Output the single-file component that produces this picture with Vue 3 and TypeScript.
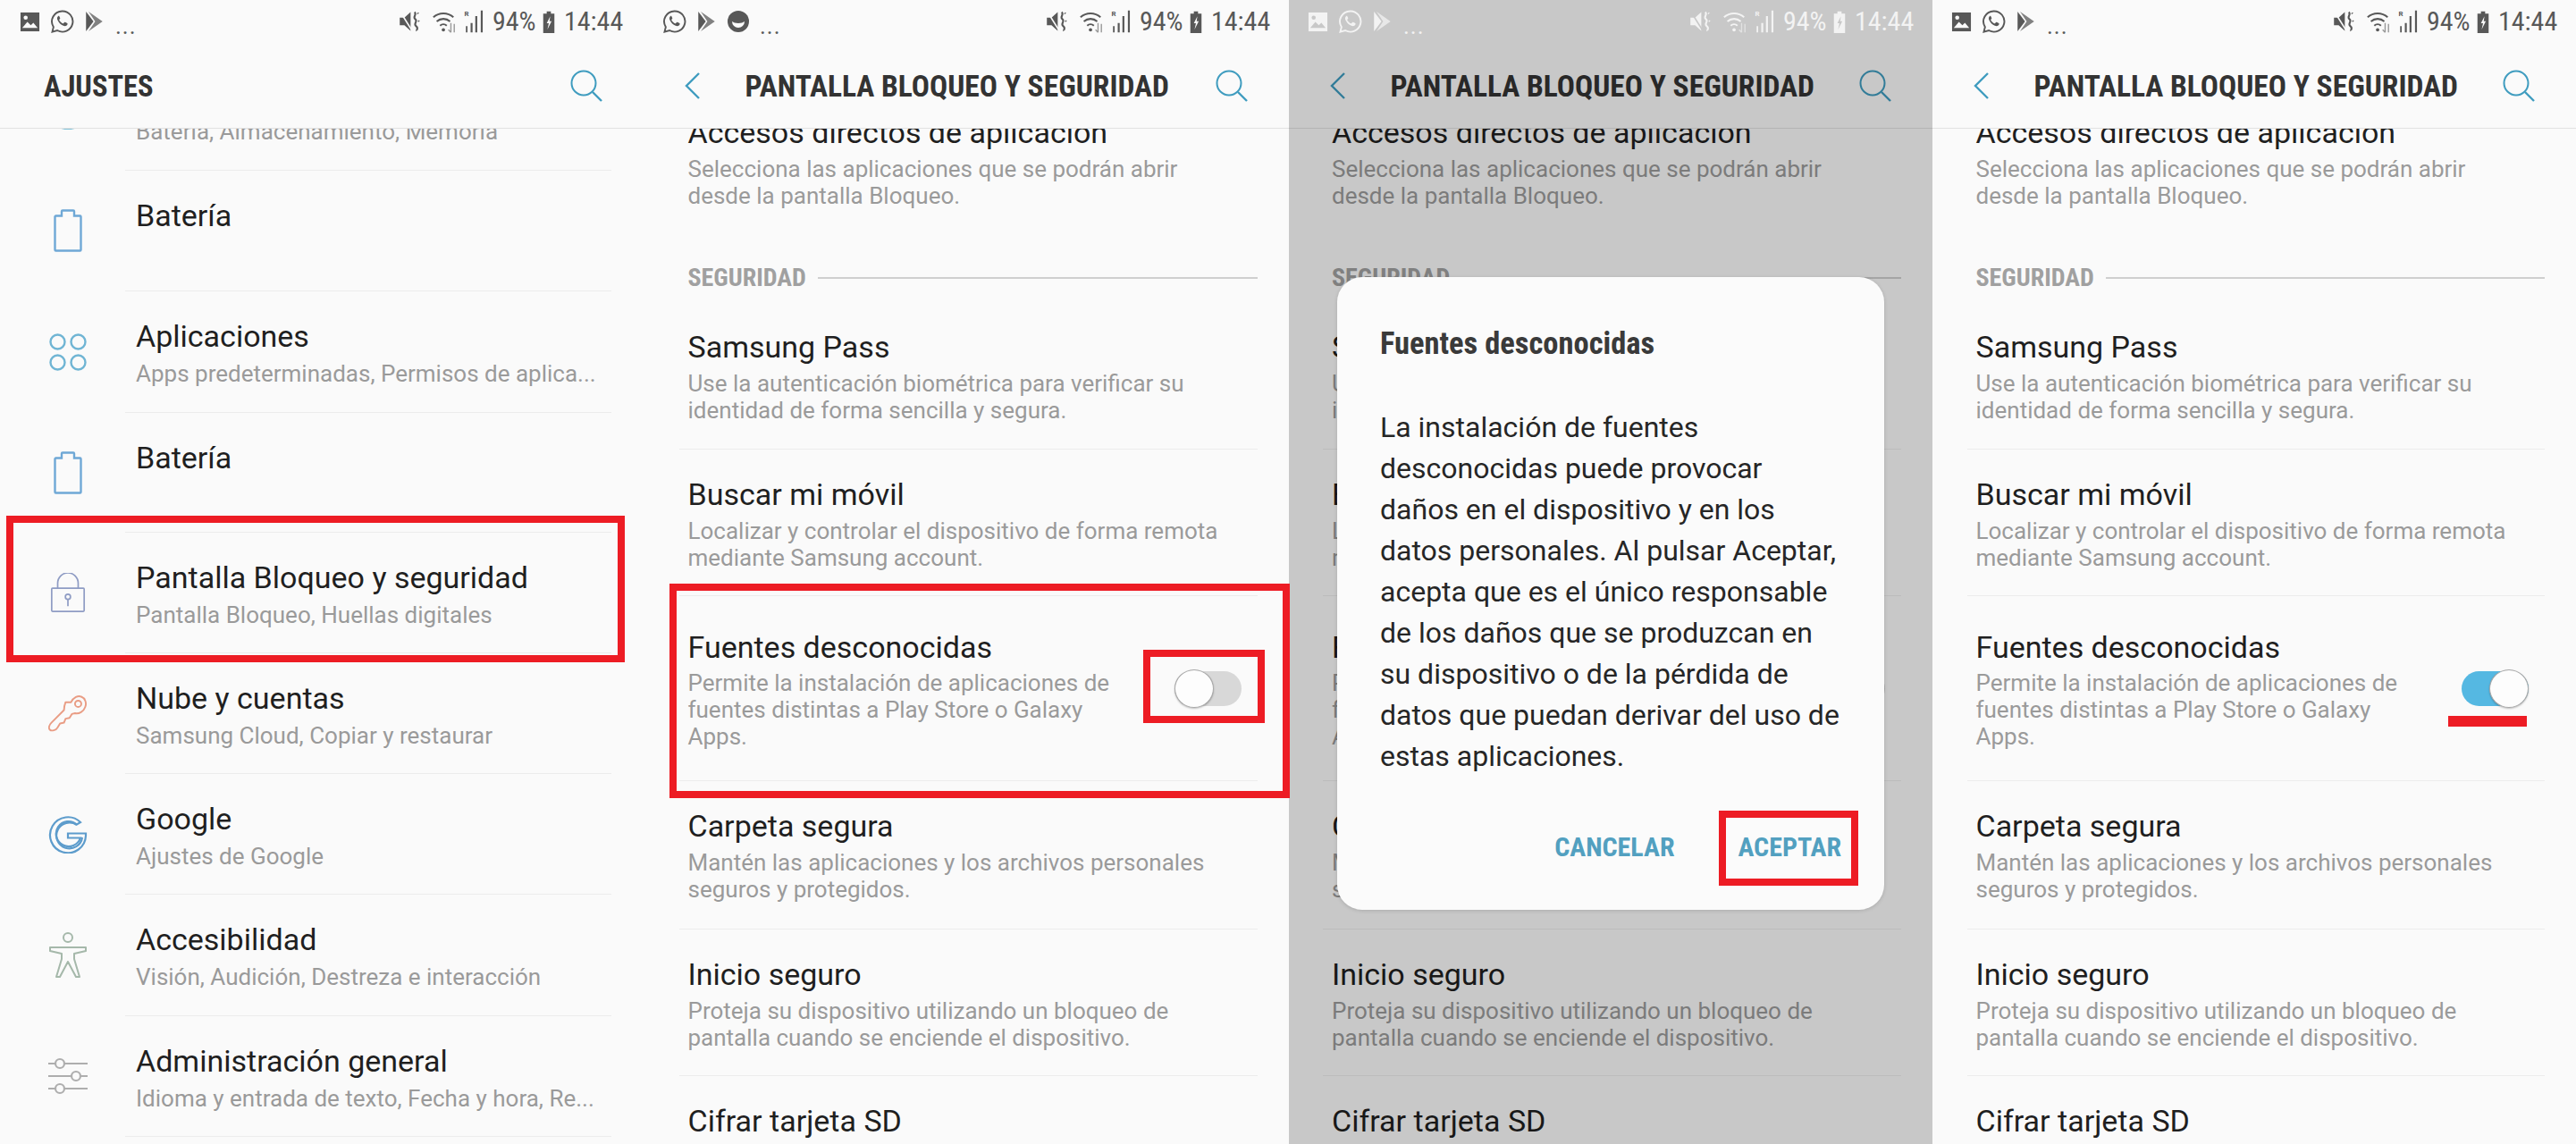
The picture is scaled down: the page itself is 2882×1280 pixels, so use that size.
<script setup lang="ts">
type Row = { t: string; s: string; icon: string; h: number };
const rows: Row[] = [
  { t: '', s: 'Batería, Almacenamiento, Memoria', icon: 'gear', h: 135 },
  { t: 'Batería', s: '', icon: 'battery', h: 134 },
  { t: 'Aplicaciones', s: 'Apps predeterminadas, Permisos de aplica...', icon: 'apps', h: 135 },
  { t: 'Batería', s: '', icon: 'battery', h: 133 },
  { t: 'Pantalla Bloqueo y seguridad', s: 'Pantalla Bloqueo, Huellas digitales', icon: 'lock', h: 134 },
  { t: 'Nube y cuentas', s: 'Samsung Cloud, Copiar y restaurar', icon: 'key', h: 134 },
  { t: 'Google', s: 'Ajustes de Google', icon: 'google', h: 134 },
  { t: 'Accesibilidad', s: 'Visión, Audición, Destreza e interacción', icon: 'body', h: 135 },
  { t: 'Administración general', s: 'Idioma y entrada de texto, Fecha y hora, Re...', icon: 'sliders', h: 134 }
];
type SRow = { t: string; lines: string[]; h: number; toggle?: boolean };
const secRows: SRow[] = [
  { t: 'Samsung Pass', lines: ['Use la autenticación biométrica para verificar su', 'identidad de forma sencilla y segura.'], h: 164 },
  { t: 'Buscar mi móvil', lines: ['Localizar y controlar el dispositivo de forma remota', 'mediante Samsung account.'], h: 163 },
  { t: 'Fuentes desconocidas', lines: ['Permite la instalación de aplicaciones de', 'fuentes distintas a Play Store o Galaxy', 'Apps.'], h: 206, toggle: true },
  { t: 'Carpeta segura', lines: ['Mantén las aplicaciones y los archivos personales', 'seguros y protegidos.'], h: 165 },
  { t: 'Inicio seguro', lines: ['Proteja su dispositivo utilizando un bloqueo de', 'pantalla cuando se enciende el dispositivo.'], h: 163 },
  { t: 'Cifrar tarjeta SD', lines: [], h: 76 }
];
const bodyLines = [
  'La instalación de fuentes',
  'desconocidas puede provocar',
  'daños en el dispositivo y en los',
  'datos personales. Al pulsar Aceptar,',
  'acepta que es el único responsable',
  'de los daños que se produzcan en',
  'su dispositivo o de la pérdida de',
  'datos que puedan derivar del uso de',
  'estas aplicaciones.'
];
const panels = [
  { key: 'p1', left: ['image', 'whatsapp', 'play'], on: false, dim: false, main: false },
  { key: 'p2', left: ['whatsapp', 'play', 'face'], on: false, dim: false, main: true },
  { key: 'p3', left: ['image', 'whatsapp', 'play'], on: false, dim: true, main: true },
  { key: 'p4', left: ['image', 'whatsapp', 'play'], on: true, dim: false, main: true }
];
</script>

<template>
  <div class="shot">
    <section v-for="p in panels" :key="p.key" class="panel" :class="[p.key, { dimmed: p.dim }]">
      <div class="status">
        <div class="st-left">
          <template v-for="ic in p.left" :key="ic">
            <svg v-if="ic === 'image'" class="si si-image" viewBox="0 0 24 24"><path d="M1 1h22v22H1z" fill="currentColor"/><circle cx="7" cy="7" r="2.4" class="cut"/><path d="M3 19l6-7 4 4 3-3 5 6z" class="cut"/></svg>
            <svg v-else-if="ic === 'whatsapp'" class="si si-wa" viewBox="0 0 28 28"><path d="M14 2a12 12 0 0 0-10 18.4L2.6 26l5.8-1.6A12 12 0 1 0 14 2z" fill="none" stroke="currentColor" stroke-width="2"/><path d="M9.5 7.800c-1.500 1-1.600 3-.6 5 1.500 3 3.500 5 6.500 6.200 2 .8 3.800.4 4.600-1 .4-.8.4-1.500 0-1.800l-2.500-1.300c-.6-.2-.9 0-1.200.5l-.7.9c-.3.2-.6.2-1 0-1.800-.9-3-2.100-3.900-3.800-.2-.4-.1-.7.1-.9l.7-.8c.2-.3.3-.6.1-1L10.700 8c-.3-.5-.7-.5-1.200-.2z" fill="currentColor"/></svg>
            <svg v-else-if="ic === 'play'" class="si si-play" viewBox="0 0 22 26"><path d="M1 1v24l9-12z" fill="currentColor"/><path d="M4 1l17 12L4 25l8-12z" fill="currentColor" opacity=".75"/></svg>
            <svg v-else class="si si-face" viewBox="0 0 24 24"><circle cx="12" cy="12" r="12" fill="currentColor"/><path d="M5 12a7 7 0 0 0 14 0 8 4 0 0 1-14 0z" class="cut"/></svg>
          </template>
          <span class="dots">...</span>
        </div>
        <div class="st-right">
          <svg class="si si-mute" viewBox="0 0 28 30"><path d="M1 10h6l8-7v24l-8-7H1z" fill="currentColor"/><path d="M2 3l15 24" class="slash" stroke-width="2"/><path d="M20 3c4 3-3 6 1 9s-3 6 1 9 0 5 1 6M24 4l1 1M25 14l1 1" stroke="currentColor" stroke-width="2.4" fill="none"/></svg>
          <svg class="si si-wifi" viewBox="0 0 30 30"><path d="M2 10a18 18 0 0 1 24 0M6 15a12 12 0 0 1 16 0M10 20a6 6 0 0 1 8 0" fill="none" stroke="currentColor" stroke-width="2.2"/><circle cx="14" cy="25" r="2" fill="currentColor"/><path d="M23 17v11M20 25l3 3M27 18v10" stroke="currentColor" stroke-width="1.5" fill="none" opacity=".6"/></svg>
          <svg class="si si-signal" viewBox="0 0 24 32"><path d="M2 22h2v8H2zM8 18h2.500v12H8zM14 9h2.500v21H14zM21 2h2.500v28H21z" fill="currentColor"/><text x="0" y="9" class="r">R</text></svg>
          <span class="pct">94%</span>
          <svg class="si si-batt" viewBox="0 0 16 32"><path d="M5 1h6v3h5v28H0V4h5z" fill="currentColor"/><path d="M10 8l-5 10h3l-2 9 6-12H9z" class="cut"/></svg>
          <span class="clock">14:44</span>
        </div>
      </div>

      <header v-if="!p.main" class="head">
        <h1 class="ajustes">AJUSTES</h1>
        <svg class="search" viewBox="0 0 36 36"><circle cx="15" cy="15" r="13.5" fill="none" stroke="currentColor" stroke-width="2"/><path d="M25 25l10 10" stroke="currentColor" stroke-width="2.4"/></svg>
      </header>
      <header v-else class="head head2">
        <svg class="back" viewBox="0 0 18 30"><path d="M16 1L2 15l14 14" fill="none" stroke="currentColor" stroke-width="2.4"/></svg>
        <h1 class="ptitle">PANTALLA BLOQUEO Y SEGURIDAD</h1>
        <svg class="search" viewBox="0 0 36 36"><circle cx="15" cy="15" r="13.5" fill="none" stroke="currentColor" stroke-width="2"/><path d="M25 25l10 10" stroke="currentColor" stroke-width="2.4"/></svg>
      </header>

      <div v-if="!p.main" class="list">
        <div class="li1">
          <template v-for="(r, i) in rows" :key="i">
            <div class="row1" :style="{ height: r.h + 'px' }">
              <div class="icon-cell">
                <svg v-if="r.icon === 'gear'" class="ic" viewBox="0 0 44 44"><circle cx="22" cy="22" r="21" fill="none" stroke="#7fc1d8" stroke-width="2.5"/></svg>
                <svg v-else-if="r.icon === 'battery'" class="ic-batt" viewBox="0 0 32 48"><path d="M1.500 8.500a1 1 0 0 1 1-1h6.500V2.500a1 1 0 0 1 1-1h12a1 1 0 0 1 1 1v5h6.500a1 1 0 0 1 1 1v37a1 1 0 0 1-1 1h-27a1 1 0 0 1-1-1z" fill="none" stroke="#6fa8d6" stroke-width="2.4"/></svg>
                <svg v-else-if="r.icon === 'apps'" class="ic" viewBox="-1 -1 44 44"><g fill="none" stroke="#70b5d4" stroke-width="2.4"><circle cx="9.500" cy="9.500" r="8"/><circle cx="32.500" cy="9.500" r="8"/><circle cx="9.500" cy="32.500" r="8"/><circle cx="32.500" cy="32.500" r="8"/></g></svg>
                <svg v-else-if="r.icon === 'lock'" class="ic" viewBox="0 0 40 46"><g fill="none" stroke="#8f9cc4" stroke-width="1.800"><path d="M8 18v-6a12 12 0 0 1 24 0v6"/><rect x="1" y="18" width="38" height="27" rx="1"/><circle cx="20" cy="28" r="3"/><path d="M20 31v8"/></g></svg>
                <svg v-else-if="r.icon === 'key'" class="ic" viewBox="0 0 50 48"><g fill="none" stroke="#e99d85" stroke-width="2.2"><path d="M29 10c3-6 9-9 13-7 5 2 7 8 5 13-2 6-8 9-13 8l-4 1-3 5-5 1-2 5-5 1-3 5c-2 4-8 5-10 3-2-2-1-6 2-9l16-16c0-3 .5-6 2-10z" stroke-linejoin="round"/><circle cx="38" cy="12" r="4"/></g></svg>
                <svg v-else-if="r.icon === 'google'" class="ic" viewBox="0 0 44 44"><g fill="none" stroke="#5d9ccc" stroke-width="2.2"><path d="M36 9a20 20 0 1 0 6 15v-2.500H22v5h14a14 14 0 1 1-4-15z"/><path d="M32 12a14.500 14.500 0 1 0 6 14"/></g></svg>
                <svg v-else-if="r.icon === 'body'" class="ic-tall" viewBox="0 0 44 52"><g fill="none" stroke="#a5b8aa" stroke-width="2" stroke-linejoin="round"><circle cx="22" cy="6" r="5"/><path d="M2 17h40v4l-13 3 0 6 6 20h-4l-9-17-9 17h-4l6-20 0-6-13-3z"/></g></svg>
                <svg v-else class="ic" viewBox="0 0 44 42"><g fill="none" stroke="#aeaeae" stroke-width="2.2"><path d="M0 7h8M18 7h26M0 21h26M36 21h8M0 35h8M18 35h26"/><circle cx="13" cy="7" r="5"/><circle cx="31" cy="21" r="5"/><circle cx="13" cy="35" r="5"/></g></svg>
              </div>
              <div class="txt">
                <div class="title">{{ r.t }}</div>
                <div v-if="r.s" class="sub">{{ r.s }}</div>
              </div>
            </div>
            <div class="rule r1"></div>
          </template>
        </div>
      </div>

      <div v-else class="list">
        <div class="li2">
          <div class="title">Accesos directos de aplicación</div>
          <div class="sub lines">
            <span>Selecciona las aplicaciones que se podrán abrir</span>
            <span>desde la pantalla Bloqueo.</span>
          </div>
          <div class="sec"><span class="sec-t">SEGURIDAD</span><i class="sec-l"></i></div>
          <template v-for="(r, i) in secRows" :key="r.t">
            <div class="row2" :class="{ tall: r.toggle }" :style="{ height: r.h + 'px' }">
              <div class="txt">
                <div class="title">{{ r.t }}</div>
                <div v-if="r.lines.length" class="sub lines"><span v-for="l in r.lines" :key="l">{{ l }}</span></div>
              </div>
              <div v-if="r.toggle" class="toggle" :class="{ on: p.on }"><i class="knob"></i></div>
            </div>
            <div v-if="i < secRows.length - 1" class="rule r2"></div>
          </template>
        </div>
      </div>

      <div v-if="p.on" class="underline"></div>
      <div v-if="p.dim" class="scrim">
        <div class="dialog">
          <h2 class="d-title">Fuentes desconocidas</h2>
          <p class="d-body"><span v-for="l in bodyLines" :key="l">{{ l }}</span></p>
          <div class="d-btns">
            <span class="btn">CANCELAR</span>
            <span class="btn">ACEPTAR</span>
          </div>
        </div>
      </div>
    </section>

    <div class="mark m-a"></div>
    <div class="mark m-b"></div>
    <div class="mark m-c"></div>
    <div class="mark m-d"></div>
  </div>
</template>

<style>
html, body { margin: 0; background: #fafafa; }
</style>

<style scoped>
.shot {
  position: relative;
  display: grid;
  grid-template-columns: 720px 722px 720px 720px;
  width: 2882px;
  height: 1280px;
  overflow: hidden;
  font-family: Roboto, "Noto Sans", sans-serif;
  background: #fafafa;
}
.panel { position: relative; display: flex; flex-direction: column; height: 1280px; overflow: hidden; background: #fafafa; --pad: 49.5px; --cut: #fafafa; }
.p3 { --pad: 48px; }
.p4 { --pad: 48.5px; }
.status { display: flex; justify-content: space-between; align-items: center; height: 48px; padding: 0 22px 0 21px; color: #585858; position: relative; z-index: 3; }
.p1 .status { padding-left: 22px; padding-right: 24px; }
.dimmed .status { color: #f3f3f3; --cut: #c8c8c8; }
.st-left, .st-right { display: flex; align-items: center; }
.si { display: block; flex: none; }
.cut { fill: var(--cut); }
.slash { stroke: var(--cut); }
.si-image { width: 23px; height: 23px; margin-right: 11px; }
.si-wa { width: 27px; height: 28px; margin-right: 12px; }
.si-play { width: 21px; height: 24px; margin-right: 13px; }
.si-face { width: 24px; height: 24px; margin-right: 12px; }
.dots { font-size: 26px; line-height: 24px; letter-spacing: 1px; margin-top: 10px; }
.si-mute { width: 27px; height: 26px; margin-right: 10px; }
.si-wifi { width: 30px; height: 28px; margin-right: 6px; }
.si-signal { width: 24px; height: 28px; margin-right: 9px; }
.r { font-size: 9px; font-weight: 700; fill: currentColor; }
.pct { font-size: 30px; line-height: 34px; width: 48px; font-stretch: 75%; margin-right: 7px; white-space: nowrap; }
.si-batt { width: 16px; height: 25px; margin-right: 9px; }
.clock { font-size: 30px; line-height: 34px; width: 65px; font-stretch: 75%; white-space: nowrap; }

.head { display: flex; align-items: center; height: 96px; box-sizing: border-box; border-bottom: 1px solid #e2e2e2; padding: 2px 46px 0 49px; flex: none; }
.head2 { padding-left: 46px; }
.search { width: 36px; height: 36px; margin-left: auto; margin-top: -2px; color: #3f9cbf; flex: none; }
.back { width: 18px; height: 30px; margin-top: -2px; color: #3f9cbf; flex: none; margin-right: 49.5px; }
.ajustes, .ptitle { margin: 0; font-weight: 700; font-stretch: 75%; color: #333; white-space: nowrap; line-height: 40px; }
.ajustes { font-size: 32.5px; }
.ptitle { font-size: 33.5px; }

.list { flex: 1; min-height: 0; overflow: hidden; }
.li1 { margin-top: -89px; }
.li2 { margin-top: -15px; padding-left: var(--pad); }
.row1 { display: flex; align-items: stretch; }
.icon-cell { flex: none; width: 152px; display: flex; align-items: center; justify-content: center; }
.ic { width: 44px; height: 44px; }
.ic-batt { width: 32px; height: 48px; }
.ic-tall { width: 44px; height: 52px; }
.txt { min-width: 0; padding-top: 31px; }
.title { font-size: 34px; line-height: 38px; min-height: 38px; color: #1f1f1f; white-space: nowrap; }
.sub { font-size: 26px; line-height: 30px; color: #9a9a9a; white-space: nowrap; margin-top: 7.5px; }
.li2 .sub { margin-top: 7px; }
.lines span { display: block; }
.rule { height: 1px; background: #ececec; }
.r1 { margin: 0 36px 0 140px; }
.r2 { margin: 0 35px 0 -10px; }
.row2 { display: flex; justify-content: space-between; align-items: center; padding-right: 53px; box-sizing: border-box; }
.row2 .txt { align-self: flex-start; padding-top: 30.5px; }
.row2.tall .txt { padding-top: 38px; }
.li2 .row2.tall .sub { margin-top: 6px; }
.sec { display: flex; align-items: center; margin: 64px 35px 15px 0; }
.sec-t { font-size: 28px; font-weight: 700; font-stretch: 75%; line-height: 25px; color: #a0a0a0; margin-right: 13px; }
.sec-l { flex: 1; height: 2px; background: #cfcfcf; }
.toggle { position: relative; width: 75px; height: 39px; border-radius: 20px; background: #d8d8d8; }
.toggle.on { background: #55b8e2; }
.knob { position: absolute; left: 0; top: -2px; width: 44px; height: 43px; box-sizing: border-box; border-radius: 50%; background: #fdfdfd; border: 1px solid #a8a8a8; box-shadow: 0 1px 2px rgba(0,0,0,.25); }
.toggle.on .knob { left: 31px; }
.underline { position: absolute; left: 577px; top: 801px; width: 88px; height: 12px; background: #ed1c24; }
.scrim { position: absolute; inset: 0; background: rgba(0,0,0,.2); z-index: 2; }
.dialog { position: absolute; left: 54px; top: 310px; width: 612px; height: 708px; box-sizing: border-box; padding: 55px 48px 0 48px; border-radius: 28px; background: #fbfbfb; box-shadow: 0 1px 4px rgba(0,0,0,.15); }
.d-title { margin: 0; font-size: 34.5px; line-height: 38px; font-weight: 700; font-stretch: 87%; color: #3a3a3a; white-space: nowrap; }
.d-body { margin: 52px 0 0; font-size: 32px; line-height: 46px; color: #262626; white-space: nowrap; }
.d-body span { display: block; }
.d-btns { display: flex; justify-content: flex-end; gap: 71px; margin-top: 62px; }
.btn { font-size: 30px; line-height: 34px; font-weight: 700; font-stretch: 75%; color: #52a0c0; white-space: nowrap; }
.mark { position: absolute; box-sizing: border-box; border: 8px solid #ed1c24; z-index: 5; }
.m-a { left: 7px; top: 577px; width: 692px; height: 164px; }
.m-b { left: 749px; top: 653px; width: 694px; height: 240px; }
.m-c { left: 1279px; top: 727px; width: 136px; height: 82px; }
.m-d { left: 1923px; top: 907px; width: 156px; height: 84px; }
</style>
